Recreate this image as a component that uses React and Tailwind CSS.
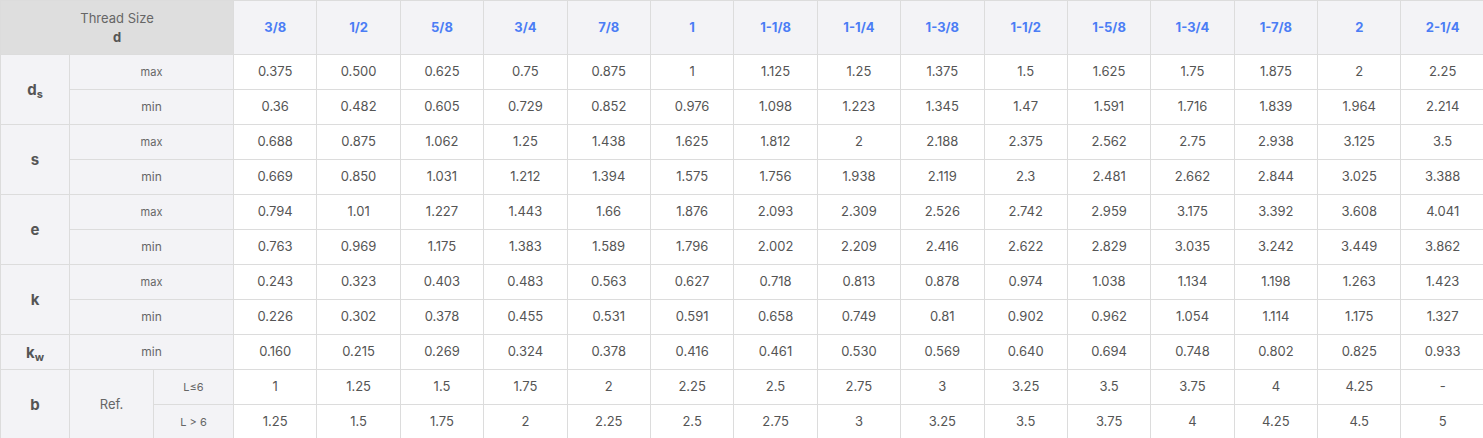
import React from "react";

const sizes = ["3/8","1/2","5/8","3/4","7/8","1","1-1/8","1-1/4","1-3/8","1-1/2","1-5/8","1-3/4","1-7/8","2","2-1/4"];
const data = {
  dsmax: ["0.375","0.500","0.625","0.75","0.875","1","1.125","1.25","1.375","1.5","1.625","1.75","1.875","2","2.25"],
  dsmin: ["0.36","0.482","0.605","0.729","0.852","0.976","1.098","1.223","1.345","1.47","1.591","1.716","1.839","1.964","2.214"],
  smax: ["0.688","0.875","1.062","1.25","1.438","1.625","1.812","2","2.188","2.375","2.562","2.75","2.938","3.125","3.5"],
  smin: ["0.669","0.850","1.031","1.212","1.394","1.575","1.756","1.938","2.119","2.3","2.481","2.662","2.844","3.025","3.388"],
  emax: ["0.794","1.01","1.227","1.443","1.66","1.876","2.093","2.309","2.526","2.742","2.959","3.175","3.392","3.608","4.041"],
  emin: ["0.763","0.969","1.175","1.383","1.589","1.796","2.002","2.209","2.416","2.622","2.829","3.035","3.242","3.449","3.862"],
  kmax: ["0.243","0.323","0.403","0.483","0.563","0.627","0.718","0.813","0.878","0.974","1.038","1.134","1.198","1.263","1.423"],
  kmin: ["0.226","0.302","0.378","0.455","0.531","0.591","0.658","0.749","0.81","0.902","0.962","1.054","1.114","1.175","1.327"],
  kw: ["0.160","0.215","0.269","0.324","0.378","0.416","0.461","0.530","0.569","0.640","0.694","0.748","0.802","0.825","0.933"],
  b1: ["1","1.25","1.5","1.75","2","2.25","2.5","2.75","3","3.25","3.5","3.75","4","4.25","-"],
  b2: ["1.25","1.5","1.75","2","2.25","2.5","2.75","3","3.25","3.5","3.75","4","4.25","4.5","5"],
};

const lab = "border border-[#dcdcdc] bg-[#f3f3f6] text-center align-middle";
const val = "border border-[#dcdcdc] bg-white text-center align-middle text-[13px] text-[#555]";

function Vals({ k }) {
  return data[k].map((v, i) => (
    <td key={i} className={val}>{v}</td>
  ));
}

function Sym({ children, sub }) {
  return (
    <span className="text-[15px] font-bold text-[#555]">
      {children}
      {sub && <span className="relative top-[3px] text-[11px] font-bold">{sub}</span>}
    </span>
  );
}

export default function App() {
  return (
    <div className="w-[1483px] h-[438px] overflow-hidden bg-white" style={{ fontFamily: "Inter, 'Noto Sans', sans-serif" }}>
      <table className="w-[1484px] table-fixed border-collapse">
        <colgroup>
          <col className="w-[69px]" />
          <col className="w-[84px]" />
          <col className="w-[80px]" />
          {sizes.map((s) => <col key={s} className="w-[83.4px]" />)}
        </colgroup>
        <thead>
          <tr className="h-[54px]">
            <th colSpan={3} className="border border-[#dcdcdc] bg-[#dedede] text-center align-middle font-normal leading-[19px]">
              <div className="text-[13px] text-[#666]">Thread Size</div>
              <div className="text-[13px] font-bold text-[#555]">d</div>
            </th>
            {sizes.map((s) => (
              <th key={s} className="border border-[#dcdcdc] bg-[#f3f3f6] text-center align-middle text-[13px] font-bold text-[#4b7df5]">{s}</th>
            ))}
          </tr>
        </thead>
        <tbody>
          <tr className="h-[35px]">
            <td rowSpan={2} className={lab}><Sym sub="s">d</Sym></td>
            <td colSpan={2} className={lab + " text-[11px] text-[#666]"}>max</td>
            <Vals k="dsmax" />
          </tr>
          <tr className="h-[35px]">
            <td colSpan={2} className={lab + " text-[12px] text-[#666]"}>min</td>
            <Vals k="dsmin" />
          </tr>
          <tr className="h-[35px]">
            <td rowSpan={2} className={lab}><Sym>s</Sym></td>
            <td colSpan={2} className={lab + " text-[11px] text-[#666]"}>max</td>
            <Vals k="smax" />
          </tr>
          <tr className="h-[35px]">
            <td colSpan={2} className={lab + " text-[12px] text-[#666]"}>min</td>
            <Vals k="smin" />
          </tr>
          <tr className="h-[35px]">
            <td rowSpan={2} className={lab}><Sym>e</Sym></td>
            <td colSpan={2} className={lab + " text-[11px] text-[#666]"}>max</td>
            <Vals k="emax" />
          </tr>
          <tr className="h-[35px]">
            <td colSpan={2} className={lab + " text-[12px] text-[#666]"}>min</td>
            <Vals k="emin" />
          </tr>
          <tr className="h-[35px]">
            <td rowSpan={2} className={lab}><Sym>k</Sym></td>
            <td colSpan={2} className={lab + " text-[11px] text-[#666]"}>max</td>
            <Vals k="kmax" />
          </tr>
          <tr className="h-[35px]">
            <td colSpan={2} className={lab + " text-[12px] text-[#666]"}>min</td>
            <Vals k="kmin" />
          </tr>
          <tr className="h-[35px]">
            <td className={lab}><Sym sub="w">k</Sym></td>
            <td colSpan={2} className={lab + " text-[12px] text-[#666]"}>min</td>
            <Vals k="kw" />
          </tr>
          <tr className="h-[35px]">
            <td rowSpan={2} className={lab}><Sym>b</Sym></td>
            <td rowSpan={2} className={lab + " text-[13px] text-[#666]"}>Ref.</td>
            <td className={lab + " text-[11px] text-[#666]"}>L≤6</td>
            <Vals k="b1" />
          </tr>
          <tr className="h-[35px]">
            <td className={lab + " text-[11px] text-[#666]"}>L &gt; 6</td>
            <Vals k="b2" />
          </tr>
        </tbody>
      </table>
    </div>
  );
}
